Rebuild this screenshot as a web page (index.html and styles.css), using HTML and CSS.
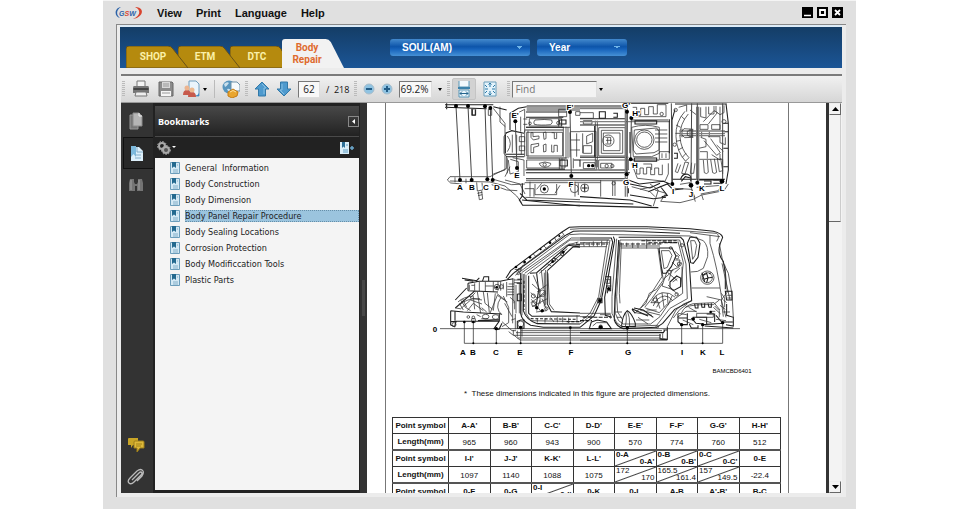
FILE: index.html
```html
<!DOCTYPE html>
<html lang="en">
<head>
    <meta charset="UTF-8">
    <meta name="viewport" content="width=device-width, initial-scale=1.0">
    <title>GSW - Body Repair</title>
    <link rel="stylesheet" href="styles.css">
</head>
<body>
    <div class="app">
        <header class="menubar">
            <svg class="logo" viewBox="0 0 28 14" role="img" aria-label="GSW">
                <path d="M6 1C-1 2 -1 11 5 12C1 9 1 4 6 1Z" fill="#2c62a8"/>
                <path d="M20 1C30 1 29 11 18 13C26 9 26 4 20 1Z" fill="#d9442f"/>
                <text x="4" y="10" class="logo-text"><tspan fill="#2c62a8">G</tspan><tspan fill="#d9442f">S</tspan><tspan fill="#2c62a8">W</tspan></text>
            </svg>
            <nav class="menu">
                <button type="button">View</button>
                <button type="button">Print</button>
                <button type="button">Language</button>
                <button type="button">Help</button>
            </nav>
            <div class="window-buttons">
                <button type="button" aria-label="Minimize"><svg viewBox="0 0 11 11"><path d="M2 8.500H9" stroke="#fff" stroke-width="1.500"/></svg></button>
                <button type="button" aria-label="Maximize"><svg viewBox="0 0 11 11"><path d="M3 3H8V8H3Z" fill="none" stroke="#fff" stroke-width="1.800"/></svg></button>
                <button type="button" aria-label="Close"><svg viewBox="0 0 11 11"><path d="M3 3L8 8M8 3L3 8" stroke="#fff" stroke-width="1.800"/></svg></button>
            </div>
        </header>

        <div class="frame">
            <div class="banner">
                <nav class="tabs">
                    <button type="button" class="tab tab-shop">
                        <svg class="tab-shape" viewBox="0 0 62 22" preserveAspectRatio="none"><path d="M0 22V3Q0 0 3 0H42Q45 0 47 3L62 22Z"/></svg>
                        <span>SHOP</span>
                    </button>
                    <button type="button" class="tab tab-etm">
                        <svg class="tab-shape" viewBox="0 0 62 22" preserveAspectRatio="none"><path d="M0 22V3Q0 0 3 0H42Q45 0 47 3L62 22Z"/></svg>
                        <span>ETM</span>
                    </button>
                    <button type="button" class="tab tab-dtc">
                        <svg class="tab-shape" viewBox="0 0 62 22" preserveAspectRatio="none"><path d="M0 22V3Q0 0 3 0H46Q49 0 51 3L62 22Z"/></svg>
                        <span>DTC</span>
                    </button>
                    <button type="button" class="tab tab-active">
                        <svg class="tab-shape" viewBox="0 0 61 29" preserveAspectRatio="none"><path d="M0 29V3Q0 0 3 0H43Q46 0 48 3L61 29Z"/></svg>
                        <span>Body<br>Repair</span>
                    </button>
                </nav>
                <div class="selectors">
                    <select class="pick pick-model" aria-label="Model"><option>SOUL(AM)</option></select>
                    <select class="pick pick-year" aria-label="Year"><option>Year</option></select>
                </div>
            </div>

            <div class="toolbar">
                <div class="group group-file">
                    <i class="grip"></i>
                    <button type="button" aria-label="Print">
                        <svg width="18" height="18" viewBox="0 0 18 18"><path d="M5 7V1H13V7" fill="#f4f4f4" stroke="#777"/><path d="M2 6H16Q17 6 17 8V13H1V8Q1 6 2 6Z" fill="#777"/><path d="M1.500 9H16.500" stroke="#444" stroke-width="2"/><path d="M4 12H14L15 16H3Z" fill="#eee" stroke="#777"/></svg>
                    </button>
                    <button type="button" aria-label="Save">
                        <svg width="18" height="18" viewBox="0 0 18 18"><path d="M2 2H15L16 3V16H2Z" fill="#8c8c8c" stroke="#666"/><path d="M5 2H13V8H5Z" fill="#d8d8d8"/><path d="M4 11H14V16H4Z" fill="#f5f5f5"/><path d="M5 13H13M6 4H12M6 6H12" stroke="#999"/></svg>
                    </button>
                    <button type="button" class="with-caret" aria-label="Share">
                        <svg width="18" height="18" viewBox="0 0 18 18"><path d="M7 1H14L17 4V16H7Z" fill="#eaf4fb" stroke="#6f9dbd"/><path d="M11 15Q15 17 17 13V16H9Z" fill="#3e8bc4"/><path d="M1 15Q1 10 5 10Q9 10 9 15Z" fill="#c75a4c"/><circle cx="5" cy="8" r="2.500" fill="#ecb48e"/><path d="M6 17Q6 12 10 12Q14 12 14 17Z" fill="#c75a4c"/><circle cx="10" cy="10" r="2.500" fill="#edb98f"/></svg>
                        <i class="caret"></i>
                    </button>
                    <i class="rule"></i>
                    <button type="button" aria-label="Web">
                        <svg width="18" height="18" viewBox="0 0 18 18"><circle cx="7" cy="7" r="6.500" fill="#5795be"/><path d="M2 4Q5 1 7 3Q5 6 3 7ZM5 9Q8 8 9 11L7 13Z" fill="#c9dfec"/><path d="M9 2H15L18 5V11H9Z" fill="#f5fafc" stroke="#6f91a8"/><path d="M6 12L11 9L16 12L15 16L10 18L6 16Z" fill="#e9a52e" stroke="#c47c16"/><path d="M8 12L11 10.500L14 12" fill="none" stroke="#ffe09a"/></svg>
                    </button>
                </div>
                <div class="group">
                    <i class="grip"></i>
                    <button type="button" aria-label="Previous page">
                        <svg width="16" height="16" viewBox="0 0 16 16"><path d="M8 1L15 8H11.500V15H4.500V8H1Z" fill="#4e9ace" stroke="#3279a8"/><path d="M8 3L12 7H10V13" fill="none" stroke="#86bfe2"/></svg>
                    </button>
                    <button type="button" aria-label="Next page">
                        <svg width="16" height="16" viewBox="0 0 16 16"><path d="M8 15L1 8H4.500V1H11.500V8H15Z" fill="#4e9ace" stroke="#3279a8"/><path d="M6 3V9H4L8 13" fill="none" stroke="#86bfe2"/></svg>
                    </button>
                    <input class="page-number" type="text" value="62" aria-label="Page">
                    <span class="page-total">/&nbsp; 218</span>
                </div>
                <div class="group">
                    <i class="grip"></i>
                    <button type="button" aria-label="Zoom out">
                        <svg width="12" height="12" viewBox="0 0 12 12"><circle cx="6" cy="6" r="5" fill="#8fc3e2" stroke="#a9bdca"/><path d="M3 6H9" stroke="#235d87" stroke-width="2"/></svg>
                    </button>
                    <button type="button" aria-label="Zoom in">
                        <svg width="12" height="12" viewBox="0 0 12 12"><circle cx="6" cy="6" r="5" fill="#8fc3e2" stroke="#a9bdca"/><path d="M3 6H9M6 3V9" stroke="#235d87" stroke-width="2"/></svg>
                    </button>
                    <input class="zoom-level" type="text" value="69.2%" aria-label="Zoom">
                    <button type="button" aria-label="Zoom levels"><i class="caret"></i></button>
                </div>
                <div class="group group-view">
                    <i class="grip"></i>
                    <button type="button" class="view-button pressed" aria-label="Fit width">
                        <svg width="14" height="18" viewBox="0 0 14 18"><path d="M2 1V7H12V1" fill="#f2f9fd" stroke="#5b98b9"/><path d="M1 8H13" stroke="#3d83ab" stroke-width="2"/><path d="M2 17V10H12V17Z" fill="#e9f5fb" stroke="#5b98b9"/><path d="M3 13.500H11M5 11.500L3 13.500L5 15.500M9 11.500L11 13.500L9 15.500" fill="none" stroke="#25658e"/></svg>
                    </button>
                    <button type="button" class="view-button" aria-label="Fit page">
                        <svg width="14" height="18" viewBox="0 0 14 18"><path d="M1 2H13V16H1Z" fill="#e4f3fb" stroke="#6a9db9"/><path d="M7 3V7M5.500 4.500L7 3L8.500 4.500M7 15V11M5.500 13.500L7 15L8.500 13.500M2 9H5M12 9H9M2 5L4 7M12 5L10 7M2 13L4 11M12 13L10 11" fill="none" stroke="#2c7aa8"/></svg>
                    </button>
                </div>
                <div class="group group-find">
                    <i class="grip"></i>
                    <input class="find" type="text" placeholder="Find" aria-label="Find">
                    <button type="button" aria-label="Find options"><i class="caret"></i></button>
                </div>
            </div>

            <div class="viewer">
                <nav class="rail">
                    <button type="button" aria-label="Pages">
                        <svg width="16" height="18" viewBox="0 0 16 18"><path d="M2 3H10V17H2Z" fill="#777" stroke="#999"/><path d="M5 1H11L14 4V14H5Z" fill="#b5b5b5" stroke="#8b8b8b"/><path d="M11 1V4H14" fill="none" stroke="#eee"/></svg>
                    </button>
                    <button type="button" class="current" aria-label="Bookmarks">
                        <svg width="16" height="18" viewBox="0 0 16 18"><path d="M5 3H10L14 7V17H2V5Z" fill="#ddeffa"/><path d="M2 2H7V13L4.500 10L2 13Z" fill="#7db9dc"/><path d="M8 3V8H14M6 11H12M6 14H12" fill="none" stroke="#82adc8"/></svg>
                    </button>
                    <button type="button" aria-label="Search">
                        <svg width="16" height="16" viewBox="0 0 16 16"><path d="M2 2H6V5L7 7H9L10 5V2H14L15 6V14H9V9H7V14H1V6Z" fill="#747474"/><path d="M3 3V13M11 3V13" stroke="#a2a2a2"/></svg>
                    </button>
                    <span class="rail-space"></span>
                    <button type="button" aria-label="Comments">
                        <svg width="18" height="16" viewBox="0 0 18 16"><path d="M1 2Q1 1 2 1H11V8H6L4 11V8H1Z" fill="#c9a527"/><path d="M7 5Q7 4 8 4H16Q17 4 17 5V11H13L10 15V11H7Z" fill="#deb93a" stroke="#9e7f18"/><path d="M9 7H15M9 9H14" stroke="#a28217"/></svg>
                    </button>
                    <button type="button" aria-label="Attachments">
                        <svg width="18" height="18" viewBox="0 0 18 18"><path d="M5 12L12 5Q14 3 15 5Q15 6 14 7L7 14Q4 17 2 15Q0 13 3 10L10 3Q14 0 16 3Q17 5 15 8L10 13" fill="none" stroke="#bbb" stroke-width="1.300"/></svg>
                    </button>
                </nav>

                <aside class="panel">
                    <div class="panel-head">
                        <h2>Bookmarks</h2>
                        <button type="button" class="collapse" aria-label="Collapse">
                            <svg width="9" height="9" viewBox="0 0 9 9"><path d="M6 2V7L3 4.500Z" fill="#fff"/></svg>
                        </button>
                    </div>
                    <div class="panel-tools">
                        <button type="button" aria-label="Options">
                            <svg width="20" height="14" viewBox="0 0 20 14"><circle cx="5" cy="5" r="3" fill="none" stroke="#aaa" stroke-width="2"/><circle cx="5" cy="5" r="4.500" fill="none" stroke="#aaa" stroke-dasharray="1.500 1.500"/><circle cx="9" cy="9" r="3" fill="#555" stroke="#aaa" stroke-width="2"/><circle cx="9" cy="9" r="4.500" fill="none" stroke="#aaa" stroke-dasharray="1.500 1.500"/><path d="M15 5H19L17 7Z" fill="#fff"/></svg>
                        </button>
                        <button type="button" aria-label="New bookmark">
                            <svg width="16" height="14" viewBox="0 0 16 14"><path d="M1 1H10V13H1Z" fill="#d9edf8"/><path d="M3 1H6V7L4.500 5.500L3 7Z" fill="#2c6f97"/><path d="M7 4H9M4 9H9M4 11H9" stroke="#5f9dc2"/><path d="M11 7H15M13 5V9" stroke="#6ba7cc" stroke-width="1.500"/></svg>
                        </button>
                    </div>
                    <svg class="defs" aria-hidden="true">
                        <symbol id="bookmark" viewBox="0 0 10 12"><path d="M.5 .5H9.500V11.500H.5Z" fill="#d4e9f5" stroke="#6b9dbb"/><path d="M2 0H6V6L4 4.500L2 6Z" fill="#23698f"/><path d="M7 3H8M3 8H8M3 10H8" stroke="#82aec8"/></symbol>
                    </svg>
                    <ul class="bookmarks">
                        <li><svg><use href="#bookmark"/></svg><a href="#">General&nbsp; Information</a></li>
                        <li><svg><use href="#bookmark"/></svg><a href="#">Body Construction</a></li>
                        <li><svg><use href="#bookmark"/></svg><a href="#">Body Dimension</a></li>
                        <li class="selected"><svg><use href="#bookmark"/></svg><a href="#">Body Panel Repair Procedure</a></li>
                        <li><svg><use href="#bookmark"/></svg><a href="#">Body Sealing Locations</a></li>
                        <li><svg><use href="#bookmark"/></svg><a href="#">Corrosion Protection</a></li>
                        <li><svg><use href="#bookmark"/></svg><a href="#">Body Modificcation Tools</a></li>
                        <li><svg><use href="#bookmark"/></svg><a href="#">Plastic Parts</a></li>
                    </ul>
                </aside>

                <div class="splitter"><i class="handle"></i></div>

                <main class="document">
                    <article class="page">
                        <svg class="figure" viewBox="386 103 402 277" role="img" aria-label="Body dimensions">
                            <!-- underbody, front half -->
                            <g class="ink" transform="translate(430 100) scale(.3333)">
                                <path class="heavy" d="M45 14H190M45 22L170 26M50 10V28M190 20L230 30"/>
                                <path d="M125 27H137V46H125ZM175 28H185V46H175ZM210 20V66L226 80M190 25L225 70V210L190 222"/>
                                <path class="heavy" d="M127 28V45H136V30"/>
                                <path d="M52 240L60 230H180M52 240L62 249L95 252M180 230L230 205V170L222 160V110L232 96M60 243L180 246M75 232V247M108 236V250M140 247L142 273L158 270L156 248M145 275L148 299L158 297L155 273"/>
                                <path d="M142 280L157 277M144 287L157 284M180 246L225 258L260 288L275 308M185 254L230 270L262 272M190 238L245 254L285 252M225 240L270 252L285 282"/>
                                <path class="heavy" d="M228 163H283M228 170H283M226 100L245 92L282 100M226 104V160M240 90V40L265 25L290 20"/>
                                <path d="M232 108Q250 130 232 155M247 104V158M260 104V158M274 100V165M232 175V220M241 178L265 185V215L240 222L235 180M248 173L282 180V228M240 200L225 230"/>
                                <path class="grey" d="M290 24H450M290 30H450M288 82H420M284 90H400M286 210H450M288 242H450"/>
                                <path class="heavy" d="M288 36H410M288 52H400M288 82H402M290 174H410M290 208H405M288 218H450M288 236H450M290 18H450M276 300L450 318"/>
                                <path d="M298 56H395V78H298ZM315 60Q345 57 365 60Q370 68 362 74Q330 77 313 73Q309 66 315 60ZM290 97H398V168H290ZM284 92V170M294 92V170M400 82V170M408 80V175M414 82V175M290 180H405V204H290ZM328 190Q345 182 362 190Q364 199 345 202Q330 200 328 190Z"/>
                                <path d="M303 112V98H309V110L327 108V116L310 120ZM303 154V134L326 130V138L311 142V158H303ZM340 98L348 96V116L342 118ZM340 135L348 132V154L341 156ZM365 98H373V116H380V98M365 134V156H372V136H382V156M420 95H450M420 120H450M420 150H450M420 97V172M440 100V170"/>
                                <path d="M386 28H410V50H386ZM386 56V80M395 56V80M388 175V207M396 175V207M430 175V205M437 35H450V46H437Z"/>
                                <path class="heavy" d="M388 60H408V72H388ZM390 180H412V198H390ZM432 180H450V200M270 280L290 300L450 306M277 250V288L268 300L278 316H450"/>
                                <path d="M300 245V290M435 245V290M284 248H450M286 292L450 299M315 252V284H380V252M320 268L335 250M375 280L390 256M445 250V285M284 266H312V290"/>
                                <path d="M265 38L284 28V98M272 50V95M280 57H292M280 73H292M268 110H284V125H268ZM268 138H284V152H268Z"/>
                                <circle cx="343" cy="267" r="12"/><circle cx="343" cy="267" r="5" class="dot"/><circle cx="344" cy="194" r="5"/><circle cx="300" cy="70" r="4"/><circle cx="385" cy="69" r="5"/><circle cx="433" cy="266" r="12"/>
                                <path class="measure" d="M78 18L90 240M114 18L125 240M165 19L172 238M181 24L188 240M256 64L261 204M420 36L424 228"/>
                                <g class="dot"><circle cx="78" cy="18" r="6"/><circle cx="114" cy="18" r="6"/><circle cx="165" cy="19" r="6"/><circle cx="181" cy="24" r="6"/><circle cx="90" cy="240" r="6"/><circle cx="125" cy="240" r="6"/><circle cx="172" cy="238" r="6"/><circle cx="188" cy="240" r="6"/><circle cx="256" cy="64" r="6"/><circle cx="261" cy="204" r="6"/><circle cx="420" cy="36" r="6"/><circle cx="424" cy="228" r="6"/></g>
                            </g>
                            <!-- underbody, rear half -->
                            <g class="ink" transform="translate(580 100) scale(.3333)">
                                <path class="heavy" d="M0 18H140M0 56H135M0 75H135M0 172H145M0 218H150M0 236H142M150 10H265M0 290L150 300L215 318M0 306L160 312M0 317L235 323"/>
                                <path d="M0 26H135M0 38H40V55H0M10 62H36V72H10ZM0 94H48V168H0M8 100V160M20 108L38 100V125L20 132ZM10 137H35V160H10ZM56 83H136V168H56ZM64 91H128V160H64ZM70 99H120V152H70ZM46 62V200M52 62V202M56 180H145V210H56ZM0 180H50V210H0"/>
                                <path class="grey" d="M136 15V290M142 15V290M0 65H270M155 60H265M155 180H238M0 24H134M0 210H134M0 242H134"/>
                                <path class="heavy" d="M165 62H230V72H165ZM163 174H230V184H163ZM44 78V170M58 35H76V55H58ZM100 40H112V52H100"/>
                                <path d="M158 22H170V46H182V25H194V44H206V20H220V42H232V14H258V50H155M155 82Q195 70 238 82V160L215 170H160ZM163 90L230 84L237 94V150L222 158L168 162L160 150ZM225 90H262M225 102H262M225 114H262M225 126H262M238 155H268V178H238ZM246 160V174M258 160V174"/>
                                <circle cx="193" cy="119" r="29"/><circle cx="193" cy="119" r="23"/><circle cx="245" cy="42" r="5"/><circle cx="85" cy="122" r="17"/><path d="M76 112H92V132H76M83 114V130M78 121H95"/>
                                <path d="M155 190L172 235L255 244L265 222V190M170 192V222H180V204H190V222H200V202H212V224H224V204H236V224H247V194M190 192H215V210M98 242V288M105 242V288M62 240V290M0 248H62M10 188H45V206H10ZM62 190H96V204H62Z"/>
                                <path class="heavy" d="M145 240L178 252L250 244L270 252M150 252L210 264L240 250M150 285L220 296L258 292M205 275L262 252L280 270L310 266M240 258L262 286L245 290M145 265V280"/>
                                <path d="M155 260L210 275L225 290M180 268L220 260M210 252L235 270L220 318M225 270L258 280L242 304L300 308L340 298L365 285L432 272L445 252M280 265L335 268L345 293M350 262L425 256L415 272L362 282M300 253L330 248L346 305M365 284L370 300"/>
                                <path class="heavy" d="M438 10L445 70V210L438 252M285 28L276 60V250M278 238H435M430 70H444M430 95H444M430 145H444M430 200H444M285 12H440M352 240H432"/>
                                <path d="M315 34Q286 65 288 110Q290 155 316 183M325 42Q299 72 300 110Q302 148 327 173M288 75L302 82M286 100H300M288 124L302 121M295 150L309 142M307 172L319 159M304 49L315 59M316 183Q322 180 327 173"/>
                                <path d="M296 22L320 15V35M362 22V50L378 54V20M386 20V42H402V18M370 65L402 32L412 38L385 72M408 18V35L420 44L432 38V16M330 30L350 45M360 74H384V88H360ZM395 74H420V88H395ZM356 145L378 140V118L362 112M372 122L410 166L421 158L392 116M384 110H420V128L436 134V112M410 135L430 154M360 155H382V176M395 164L420 180V162M365 95V112M388 95V112M420 20V90"/>
                                <path class="grey" d="M298 93H435M300 101H435M298 107H435M306 86V112M330 86V112M350 20V240M356 20V240"/>
                                <path d="M305 95L312 86L340 88M305 104L314 113L340 112M322 94L338 89V111L322 106ZM315 186L305 220L315 222L326 188ZM335 188L331 220H341L345 190M370 180L373 218Q380 224 385 217L382 180M392 178L398 218Q404 223 410 217L403 176M412 174L418 215L428 212L422 174M358 178H428V222M294 190L286 215L293 218L302 194"/>
                                <path class="heavy" d="M302 237Q308 219 323 223Q337 228 332 243M304 244L316 230L332 234M372 243H393V252H372M400 240H424V250H400M150 96V160M268 58V160M282 160H292V175H282"/>
                                <circle cx="432" cy="65" r="6"/><circle cx="284" cy="134" r="5"/><circle cx="287" cy="30" r="5"/><circle cx="97" cy="198" r="5"/><circle cx="80" cy="198" r="5"/><circle cx="101" cy="250" r="5"/><circle cx="14" cy="264" r="12"/><path class="heavy" d="M5 264H23M14 253V275"/>
                                <path class="measure" d="M141 35L140 223M154 54L152 178M274 10L277 252M335 10L333 256M352 10V248M428 10V244"/>
                                <g class="dot"><circle cx="141" cy="35" r="6"/><circle cx="154" cy="54" r="6"/><circle cx="152" cy="178" r="6"/><circle cx="140" cy="223" r="6"/><circle cx="277" cy="252" r="6"/><circle cx="333" cy="256" r="7"/><circle cx="352" cy="248" r="6"/><circle cx="426" cy="244" r="7"/><circle cx="26" cy="197" r="5"/><circle cx="38" cy="197" r="5"/></g>
                            </g>
                            <!-- side view, front half -->
                            <g class="ink" transform="translate(430 220) scale(.3333)">
                                <path d="M30 326H450M103 305V370M130 305V370M199 325V370M272 322V370M421 322V370M103 370H450"/>
                                <path class="heavy" d="M96 175L140 182L148 174M104 180L130 184M114 190L148 184M114 190V212M148 184H210L250 176M114 212L204 216M157 185L162 170H176V184M110 204L76 240M133 214L76 264"/>
                                <path d="M118 194V210M134 190V212M148 186V214M166 186V214M190 184V216M204 184V212M166 198H190M124 196H134M212 184V212M220 190V208M230 186V230M236 192H252M232 200H252M232 208H252M232 216H252M232 224H252M252 176V250"/>
                                <path class="heavy" d="M62 272V315L74 320L78 304H206M62 272L100 276L214 282M75 272V302M62 305H80M144 302L208 299M208 280V303L192 326L207 328L216 310"/>
                                <path d="M84 246Q100 230 132 228M86 256Q110 234 150 236M90 268L122 240L156 252M112 272L130 250L160 272M136 218L120 234L156 240M142 215L152 280M160 216L165 250L188 268M172 218L178 278M196 220L190 272M200 220L225 240M180 280L202 226L232 246M212 234Q192 264 216 285M220 228L236 262V308L216 320M76 264L90 266M92 240L106 262L122 272M155 263L170 276M88 250L100 270M224 250L246 290M130 230L134 268M98 237L110 262M140 284L152 290M154 296H174"/>
                                <ellipse cx="167" cy="290" rx="10" ry="7"/><ellipse cx="197" cy="291" rx="10" ry="7"/><circle cx="115" cy="291" r="4"/><circle cx="201" cy="201" r="8"/><circle cx="72" cy="314" r="6"/><circle cx="214" cy="200" r="6"/><circle cx="130" cy="292" r="4"/><path d="M125 296H136V307H125Z"/>
                                <path class="heavy" d="M228 174L242 152L396 36L418 22L450 20M232 178L250 160L410 44L430 34L450 33"/>
                                <path d="M252 158L400 46M256 166L418 44L450 42M275 158L424 54H450M284 160L420 60H450M292 163L410 76L445 66M254 148L272 150L280 134M396 36L404 48M374 54L380 64M342 78L350 86M310 102L318 110M278 126L286 134M420 28L450 26"/>
                                <path class="heavy" d="M272 158V280Q275 302 302 316L340 322L450 322M282 162L280 272Q290 302 322 311L450 312M296 167V280L306 289L450 288"/>
                                <path d="M276 160V286M288 164V280L302 302L450 305M252 180H270M252 188H270M248 176V310M258 195V280M268 190V280M240 232L254 244V268M256 282V328M244 300L256 296M262 332V350"/>
                                <path class="heavy" d="M300 160L320 158L415 76L450 80M352 152L430 80L450 82M320 160L326 210L318 260M352 154V252L364 275L450 279M262 178H276M260 190H276M262 222H274V242H262V222M272 300H282V325H262V304Z"/>
                                <path d="M310 166L330 212V252M334 150L340 206M343 158V260M347 150V255M322 215L350 195M302 218L322 235L348 212M306 192L332 215M302 248L346 220M306 260L352 236M330 240L320 272M350 272L318 276M336 236L350 268M304 238L336 278M354 160L358 252L372 271M328 160L412 86M338 152L406 92M350 130L364 138M370 112L384 120M392 94L402 102M416 72L450 76M440 66V76M430 82L438 74H450"/>
                                <circle cx="337" cy="220" r="10"/><circle cx="268" cy="150" r="5"/><circle cx="265" cy="160" r="4"/><circle cx="310" cy="228" r="6"/><circle cx="312" cy="252" r="7"/><circle cx="349" cy="266" r="5"/><circle cx="272" cy="312" r="9"/><circle cx="396" cy="102" r="5"/><circle cx="372" cy="120" r="5"/>
                                <g class="dot"><circle cx="258" cy="141" r="4"/><circle cx="284" cy="126" r="4"/><circle cx="300" cy="112" r="4"/><circle cx="332" cy="88" r="3"/><circle cx="360" cy="68" r="4"/><circle cx="388" cy="48" r="3"/><circle cx="368" cy="125" r="4"/><circle cx="400" cy="96" r="4"/><circle cx="320" cy="263" r="5"/><circle cx="337" cy="272" r="5"/><circle cx="200" cy="202" r="4"/></g>
                                <path class="heavy" stroke-dasharray="9 5" d="M302 296L440 298M282 182V270M450 73H436M410 305H450"/>
                                <path d="M322 295V308M345 295V308M362 293L372 306M382 292V307M398 292V307M416 293V310M441 286V306M216 305L246 332L258 332M236 335L250 346H450M250 330V344L262 354H450M276 324V350M258 338H450M272 332H450M262 354L270 360H450"/>
                                <g class="dot"><circle cx="103" cy="306" r="4"/><circle cx="130" cy="306" r="4"/><circle cx="199" cy="326" r="5"/><circle cx="272" cy="322" r="5"/><circle cx="421" cy="323" r="4"/><circle cx="130" cy="370" r="3"/><circle cx="199" cy="370" r="3"/><circle cx="272" cy="370" r="3"/><circle cx="421" cy="370" r="3"/></g>
                            </g>
                            <!-- side view, rear half -->
                            <g class="ink" transform="translate(580 220) scale(.3333)">
                                <path d="M0 326H480M0 370H428M142 325V370M305 314V370M368 314V370M428 308V370"/>
                                <path class="heavy" d="M0 20H200L330 26L400 34Q425 40 428 52L421 70Q410 100 430 124L436 160V208M0 33H130L300 40"/>
                                <path d="M0 26H205L330 34L410 40Q421 48 410 64M0 42L330 48L370 62Q386 78 383 110L370 145Q354 158 332 156M330 38L420 50M418 70L428 124L445 160L456 222L460 292M426 130L450 240M434 134L442 216L424 240L438 292M390 46V70Q412 140 426 240"/>
                                <path class="heavy" d="M0 54H94L98 66L64 240L42 288L0 322M0 60H88M100 50L104 60L74 232L76 286L96 292M116 52H302L310 60L328 130L335 242L284 268L248 310L230 322L130 326Q108 318 103 300V278L116 60"/>
                                <path d="M82 60L56 230L30 280L0 306M90 60L62 228L36 284L0 312M110 56L96 230V280L110 308L126 320L230 316L270 265L322 236L318 132L299 60H120L104 232L106 280L116 302L130 312H212L240 290L268 248L308 220L306 140M294 64L310 128L302 200M120 66L110 230L113 276L128 300M124 68L118 220L120 250"/>
                                <path class="heavy" stroke-dasharray="12 4" d="M0 72H84M120 72H246M184 62H290M0 302H36M8 292H92M205 68H282M248 66L294 68"/>
                                <path d="M0 68H86M0 80H80M120 78H240M122 84H234M158 68V84M174 68V84M28 68V80M52 68V80M200 58V86M12 66V80M40 64V78M65 62V78M140 68V80"/>
                                <path class="heavy" d="M237 84H276L288 108L274 140L258 160H248L244 140ZM330 52H350L360 70L354 112L340 130L332 128L322 70ZM270 186L290 168L302 174V200L280 212L270 202Z"/>
                                <path d="M244 92H268L276 106L262 142L252 146ZM332 62H344L350 76L345 106L338 118ZM278 186L292 176M244 145L250 180L230 208L208 220L198 250L166 278M250 178L268 162L292 182M260 158L246 198L282 210M248 190L216 235L194 262M234 84L246 170L214 220L182 264M286 120H300L296 142L276 150L266 182M276 126L290 140L306 128M264 195L296 226M260 152H280M300 144L284 158M285 94L300 108"/>
                                <path d="M214 248Q222 224 248 218Q270 216 286 232M220 258Q228 232 254 228Q268 228 278 242M230 262Q238 242 258 238M246 218L252 262M228 228L240 266M262 220L264 252M276 228L264 256M212 248H240M196 264L238 278L262 252M200 270H230M166 278L216 286M180 270L240 285"/>
                                <path class="heavy" d="M156 266L204 288M162 264L190 270L220 292M156 268L166 280M125 316Q128 284 142 272Q156 280 166 310V320H126ZM76 170H92V212H82V220M78 198H94M54 236H66V248H54ZM34 306L52 300L80 306L94 326H28Z"/>
                                <path d="M142 272Q150 290 149 320M136 276Q142 290 136 320M78 178H90V190H78ZM106 276H126M0 280H92M0 290H40M60 284H92V296M38 318L50 308H80L90 320M110 292H126M168 300H208M174 292L204 312"/>
                                <circle cx="382" cy="173" r="20"/><circle cx="382" cy="173" r="15"/><path class="heavy" d="M370 166L380 160L384 174L398 172M380 188L384 174L372 178M388 162L392 158M366 158L374 186"/>
                                <circle cx="298" cy="132" r="6"/><circle cx="268" cy="156" r="5"/><circle cx="291" cy="112" r="5"/><circle cx="290" cy="223" r="5"/><circle cx="226" cy="240" r="6"/><circle cx="232" cy="320" r="4"/><circle cx="62" cy="320" r="5"/><circle cx="272" cy="84" r="4"/><circle cx="306" cy="76" r="5"/>
                                <path d="M335 204H420M335 242Q310 248 288 270L262 320M322 252Q298 264 280 294M304 280Q314 256 340 251L402 248L420 270M316 262Q338 252 400 254L418 240M294 280L320 284M380 230L424 240L430 290M292 292L318 274H350M400 262L422 282M308 300L340 314"/>
                                <path class="heavy" d="M294 282V305L304 314H322V294H296M322 280V310M344 252L346 264H354V252M364 250L366 262H374V250M384 250L387 262H394V250M334 294L348 310L370 312M338 292H380V312M366 314L432 310M380 282H404V306M408 286L425 306H458M436 214H456V240H440ZM440 252V286L460 292V318L438 314M374 318L460 324M328 312L334 324H354V316M262 320V358L240 356V342M0 338H250L254 332M0 360H262M250 330H262"/>
                                <path d="M350 280H400V292H350ZM326 262L350 276M404 258L418 272V292M424 220L434 234V262M442 226H456M442 234H454M428 276H450M408 298L438 302M420 256L436 268M322 298L340 300M392 274H406M0 332H246M0 346H242M0 354H240M248 340V354M358 298L394 308M430 240L440 248"/>
                                <g class="dot"><circle cx="142" cy="324" r="5"/><circle cx="305" cy="314" r="5"/><circle cx="368" cy="314" r="5"/><circle cx="428" cy="308" r="5"/><circle cx="340" cy="297" r="5"/><circle cx="62" cy="322" r="6"/><circle cx="86" cy="206" r="5"/><circle cx="305" cy="370" r="3"/><circle cx="368" cy="370" r="3"/><circle cx="142" cy="370" r="3"/><circle cx="60" cy="242" r="5"/><circle cx="392" cy="276" r="4"/></g>
                            </g>
                            <g class="marks halo">
                                <text x="460" y="190">A</text><text x="472" y="190">B</text><text x="486" y="190">C</text><text x="497" y="190">D</text>
                                <text x="515" y="118">E'</text><text x="517" y="178">E</text><text x="571" y="187">F</text><text x="570" y="110">F'</text>
                                <text x="626" y="185">G</text><text x="626" y="108">G'</text><text x="635" y="168">H</text><text x="636" y="116">H'</text>
                                <text x="673" y="194">I</text><text x="691" y="197">J</text><text x="702" y="191">K</text><text x="722" y="191">L</text>
                            </g>
                            <g class="marks">
                                <text x="435" y="332">0</text>
                                <text x="463" y="355">A</text><text x="473" y="355">B</text><text x="496" y="355">C</text><text x="520" y="355">E</text><text x="571" y="355">F</text>
                                <text x="628" y="355">G</text><text x="682" y="355">I</text><text x="703" y="355">K</text><text x="722" y="355">L</text>
                            </g>
                            <text class="code" x="732" y="373">BAMCBD6401</text>
                        </svg>

                        <p class="note">*&nbsp; These dimensions indicated in this figure are projected dimensions.</p>

                        <table class="lengths">
                            <tr>
                                <th scope="row">Point symbol</th>
                                <th>A-A'</th><th>B-B'</th><th>C-C'</th><th>D-D'</th><th>E-E'</th><th>F-F'</th><th>G-G'</th><th>H-H'</th>
                            </tr>
                            <tr class="block-end">
                                <th scope="row">Length(mm)</th>
                                <td>965</td><td>960</td><td>943</td><td>900</td><td>570</td><td>774</td><td>760</td><td>512</td>
                            </tr>
                            <tr>
                                <th scope="row">Point symbol</th>
                                <th>I-I'</th><th>J-J'</th><th>K-K'</th><th>L-L'</th>
                                <th class="split"><div><span>0-A</span><span>0-A'</span></div></th>
                                <th class="split"><div><span>0-B</span><span>0-B'</span></div></th>
                                <th class="split"><div><span>0-C</span><span>0-C'</span></div></th>
                                <th>0-E</th>
                            </tr>
                            <tr class="block-end">
                                <th scope="row">Length(mm)</th>
                                <td>1097</td><td>1140</td><td>1088</td><td>1075</td>
                                <td class="split"><div><span>172</span><span>170</span></div></td>
                                <td class="split"><div><span>165.5</span><span>161.4</span></div></td>
                                <td class="split"><div><span>157</span><span>149.5</span></div></td>
                                <td>-22.4</td>
                            </tr>
                            <tr>
                                <th scope="row">Point symbol</th>
                                <th>0-F</th><th>0-G</th>
                                <th class="split"><div><span>0-I</span><span>0-I'</span></div></th>
                                <th>0-K</th><th>0-L</th><th>A-B</th><th>A'-B'</th><th>B-C</th>
                            </tr>
                        </table>
                    </article>
                </main>

                <div class="scrollbar">
                    <button type="button" aria-label="Scroll up"><svg width="7" height="4" viewBox="0 0 7 4"><path d="M3.500 0L7 4H0Z"/></svg></button>
                    <span class="thumb"></span>
                    <button type="button" aria-label="Scroll down"><svg width="7" height="4" viewBox="0 0 7 4"><path d="M3.500 4L0 0H7Z"/></svg></button>
                </div>
            </div>
        </div>
    </div>
</body>
</html>
```

FILE: styles.css
```css
* {
    box-sizing: border-box;
}
body {
    margin: 0;
    background-color: #fff;
    color: #111;
    font-family: "Liberation Sans", Arial, sans-serif;
    font-size: 11px;
}
button {
    padding: 0;
    border: none;
    background: none;
    font: inherit;
    color: inherit;
    cursor: pointer;
}
svg {
    display: block;
}
.app {
    display: flex;
    flex-direction: column;
    height: 100vh;
    margin: 0 104px 0 103px;
    padding-bottom: 12px;
    border-top: 1px solid #f4f4f4;
    background-color: #e0e0e0;
}

/* Menu bar */
.menubar {
    display: flex;
    align-items: center;
    height: 23px;
    padding: 0 13px 0 12px;
}
.logo {
    width: 28px;
    height: 14px;
}
.logo-text {
    font-size: 7px;
    font-weight: bold;
    font-style: italic;
}
.menu {
    display: flex;
    gap: 14px;
    margin-left: 14px;
    font-weight: bold;
}
.window-buttons {
    display: flex;
    gap: 4px;
    margin-left: auto;
}
.window-buttons button {
    width: 11px;
    height: 11px;
    background-color: #000;
}

.frame {
    display: flex;
    flex: 1;
    flex-direction: column;
    min-height: 0;
    margin: 0 10px 0 13px;
    padding: 0 4px 4px 3px;
    border-top: 1px solid #888;
    border-left: 1px solid #888;
    background-color: #ececec;
}

/* Blue banner */
.banner {
    display: flex;
    align-items: flex-end;
    height: 43px;
    padding-left: 6px;
    border-top: 2px solid #dcebf7;
    background: linear-gradient(#143d66, #1b5596);
}
.tabs {
    display: flex;
    align-items: flex-end;
    font-family: Roboto, sans-serif;
    font-size: 10px;
    font-weight: bold;
    line-height: 12px;
}
.tab {
    position: relative;
    width: 62px;
    height: 22px;
    margin-right: -10px;
    color: #fbf0a8;
}
.tab span {
    position: relative;
    display: block;
    margin-right: 8px;
}
.tab-shape {
    position: absolute;
    top: 0;
    left: 0;
    width: 100%;
    height: 100%;
    fill: #b58a0e;
    stroke: #67511a;
}
.tab-shop {
    z-index: 3;
}
.tab-etm {
    z-index: 2;
}
.tab-dtc {
    z-index: 1;
}
.tab-active {
    z-index: 4;
    height: 29px;
    margin-right: 0;
    color: #df6a2e;
}
.tab-active span {
    margin-right: 12px;
}
.tab-active .tab-shape {
    fill: #f2f2f2;
    stroke: none;
}
.selectors {
    display: flex;
    gap: 7px;
    align-self: center;
    margin-left: 46px;
}
.pick {
    appearance: none;
    height: 17px;
    padding: 0 12px;
    border: none;
    border-radius: 3px;
    background:
        linear-gradient(45deg, transparent 50%, #6fb4e8 50%) right 10px center / 3px 3px no-repeat,
        linear-gradient(-45deg, transparent 50%, #6fb4e8 50%) right 7px center / 3px 3px no-repeat,
        linear-gradient(#4389cd, #0d55aa 45%, #1763bb 60%, #4691d6);
    color: #fff;
    font-family: "Liberation Sans", Arial, sans-serif;
    font-size: 10px;
    font-weight: bold;
}
.pick-model {
    width: 140px;
}
.pick-year {
    width: 90px;
}

/* Viewer toolbar */
.toolbar {
    display: flex;
    align-items: center;
    gap: 5px;
    height: 29px;
    margin: 6px 0 0 1px;
    padding-left: 1px;
    border-top: 2px solid #7b7b7b;
    border-bottom: 1px solid #999;
    background: linear-gradient(#f1f1f1, #d6d6d6);
    font-family: "Open Sans", sans-serif;
    font-size: 10px;
}
.group {
    display: flex;
    align-items: center;
    gap: 6px;
}
.group-file {
    gap: 7px;
}
.group-view,
.group-find {
    gap: 2px;
}
.grip {
    width: 3px;
    height: 16px;
    background: repeating-linear-gradient(#bbb 0 1px, transparent 1px 2px);
}
.rule {
    width: 1px;
    height: 18px;
    background-color: #bbb;
}
.caret {
    display: block;
    width: 0;
    border: 2px solid transparent;
    border-top: 3px solid #000;
    border-bottom: none;
}
.with-caret {
    display: flex;
    align-items: center;
    gap: 3px;
}
.toolbar input {
    height: 17px;
    padding: 0 2px;
    border: 1px solid;
    border-color: #777 #ddd #ddd #777;
    background-color: #f8f8f8;
    color: #222;
    font: inherit;
}
.toolbar .page-number {
    width: 22px;
    text-align: center;
}
.page-total {
    font-size: 9px;
}
.toolbar .zoom-level {
    width: 33px;
    padding: 0;
}
.toolbar .find {
    width: 85px;
    background-color: #f3f3f3;
}
.find::placeholder {
    color: #777;
}
.view-button {
    display: grid;
    place-items: center;
    width: 24px;
    height: 22px;
}
.view-button.pressed {
    border: 1px solid #c4c4c4;
    border-radius: 2px;
    background-color: #d2d2d2;
}

/* Viewer */
.viewer {
    display: flex;
    flex: 1;
    min-height: 0;
    margin-left: 1px;
    background-color: #333;
}
.rail {
    display: flex;
    flex-direction: column;
    width: 32px;
    padding: 2px 0 0 2px;
}
.rail button {
    display: grid;
    place-items: center;
    height: 32px;
    padding-right: 4px;
}
.rail .current {
    border: 1px solid #111;
    border-right: none;
    background-color: #282828;
}
.rail-space {
    flex: 1;
}
.panel {
    display: flex;
    flex-direction: column;
    width: 207px;
    padding: 3px 1px 3px 2px;
    background-color: #222;
}
.panel-head {
    display: flex;
    align-items: center;
    justify-content: space-between;
    height: 31px;
    padding-left: 3px;
    border-bottom: 1px solid #4a4a4a;
    background: linear-gradient(#484848, #222);
    color: #fff;
}
.panel-head h2 {
    margin: 0;
    font-family: "Open Sans", sans-serif;
    font-size: 9px;
}
.collapse {
    border: 1px solid #888;
}
.panel-tools {
    display: flex;
    align-items: center;
    justify-content: space-between;
    height: 21px;
    padding: 0 4px 0 2px;
}
.defs {
    width: 0;
    height: 0;
}
.bookmarks {
    flex: 1;
    margin: 0;
    padding: 2px 0;
    background-color: #f4f4f4;
    list-style: none;
    font-family: "DejaVu Sans", sans-serif;
    font-size: 9px;
}
.bookmarks li {
    display: flex;
    align-items: center;
    gap: 5px;
    height: 16px;
    padding-left: 15px;
}
.bookmarks svg {
    width: 10px;
    height: 12px;
}
.bookmarks a {
    flex: 1;
    color: #222;
    font-family: "DejaVu Sans Condensed", "DejaVu Sans", sans-serif;
    line-height: 12px;
    text-decoration: none;
}
.bookmarks .selected a {
    outline: 1px dotted #668fa9;
    outline-offset: -1px;
    background-color: #9bc4de;
}
.splitter {
    display: flex;
    align-items: center;
    justify-content: center;
    width: 7px;
}
.handle {
    width: 3px;
    height: 36px;
    background-color: #484848;
}

/* Document page */
.document {
    flex: 1;
    min-width: 0;
    overflow: hidden;
    background-color: #fff;
}
.page {
    margin: 0 37px 0 18px;
    border: 1px solid #777;
    border-width: 0 1px;
}
.figure {
    width: 100%;
}
.ink {
    fill: none;
    stroke: #333;
    stroke-width: 2.3;
}
.ink .heavy {
    stroke: #1e1e1e;
    stroke-width: 3.2;
}
.ink .grey {
    stroke: #808080;
    stroke-width: 4;
}
.ink .measure {
    stroke: #444;
    stroke-width: 3;
}
.ink .dot {
    fill: #000;
    stroke: none;
}
.marks {
    font-size: 8px;
    font-weight: bold;
    text-anchor: middle;
}
.halo {
    paint-order: stroke;
    stroke: #fff;
    stroke-width: 2px;
}
.code {
    font-size: 6px;
    text-anchor: middle;
}
.note {
    margin: 7px 0 16px;
    font-size: 8px;
    line-height: 14px;
    text-align: center;
    white-space: nowrap;
}
.lengths {
    width: calc(100% - 13px);
    margin: 0 7px 0 6px;
    border-collapse: collapse;
    table-layout: fixed;
    font-size: 8px;
    line-height: 8px;
    text-align: center;
}
.lengths th,
.lengths td {
    height: 16px;
    padding: 1px 0 0;
    border: 1px solid #333;
}
.lengths td {
    padding-top: 3px;
}
.lengths th:first-child {
    width: 56px;
}
.lengths .block-end > * {
    border-bottom: 2px solid #555;
}
.lengths .split {
    padding: 0;
}
.split div {
    display: flex;
    flex-direction: column;
    height: 15px;
    line-height: 7px;
    background: linear-gradient(to bottom right, transparent calc(50% - 1px), #444 50%, transparent calc(50% + 1px));
}
.split span {
    padding: 0 1px;
    text-align: left;
}
.split span + span {
    text-align: right;
}

/* Scroll bar */
.scrollbar {
    display: flex;
    flex-direction: column;
    width: 16px;
    padding-right: 1px;
    border-left: 3px solid #333;
    background-color: #f3f3f3;
}
.scrollbar button {
    display: grid;
    place-items: center;
    height: 12px;
    border: 1px solid;
    border-color: #eee #666 #666 #eee;
}
.scrollbar .thumb {
    height: 107px;
    margin-bottom: auto;
    border-right: 1px solid #ccc;
    border-bottom: 1px solid #666;
}
```
